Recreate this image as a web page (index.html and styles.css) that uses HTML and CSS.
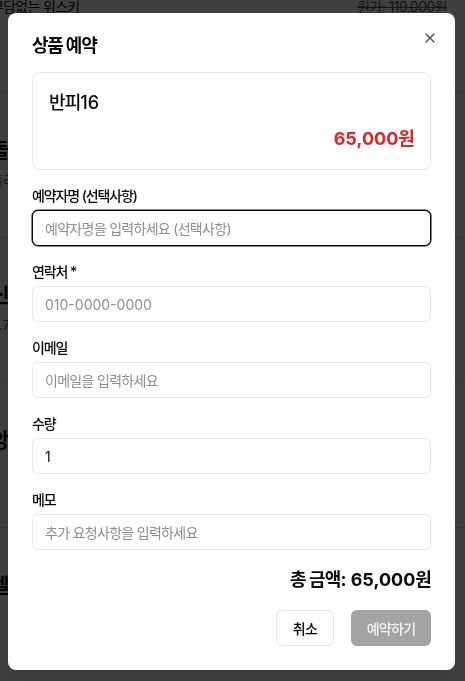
FILE: index.html
```html
<!DOCTYPE html>
<html lang="ko">
<head>
<meta charset="utf-8">
<title>상품 예약</title>
<link rel="stylesheet" href="styles.css">
</head>
<body>
<div class="page">
  <div class="top-row">
    <span class="top-name ko">부담없는 위스키</span>
    <span class="top-price">원가: 119,000원</span>
  </div>
  <div class="bg-item">
    <h3 class="bg-title">돌체</h3>
    <p class="bg-sub">홀리</p>
  </div>
  <div class="bg-item">
    <h3 class="bg-title">신상</h3>
    <p class="bg-sub">0.7</p>
  </div>
  <div class="bg-item">
    <h3 class="bg-title">앙상</h3>
    <p class="bg-sub">·</p>
    <p class="bg-sub">·</p>
  </div>
  <div class="bg-item">
    <h3 class="bg-title">벨벳</h3>
    <p class="bg-sub">·</p>
    <p class="bg-sub">·</p>
  </div>
</div>

<div class="overlay"></div>

<div class="modal" role="dialog">
  <h2 class="modal-title">상품 예약</h2>
  <button class="close-btn" aria-label="닫기">
    <svg width="16" height="16" viewBox="0 0 24 24" fill="none" stroke="currentColor" stroke-width="2" stroke-linecap="round" stroke-linejoin="round"><path d="M18 6 6 18"/><path d="m6 6 12 12"/></svg>
  </button>

  <div class="product-card">
    <div class="product-name"><span class="ko-lg">반피</span>16</div>
    <div class="product-price">65,000<span class="ko-lg">원</span></div>
  </div>

  <form class="form">
    <div class="field">
      <label class="label">예약자명 (선택사항)</label>
      <input class="input ko input-focus" type="text" placeholder="예약자명을 입력하세요 (선택사항)">
    </div>
    <div class="field">
      <label class="label">연락처 *</label>
      <input class="input" type="text" placeholder="010-0000-0000">
    </div>
    <div class="field">
      <label class="label">이메일</label>
      <input class="input ko" type="text" placeholder="이메일을 입력하세요">
    </div>
    <div class="field">
      <label class="label">수량</label>
      <input class="input" type="text" value="1">
    </div>
    <div class="field">
      <label class="label">메모</label>
      <input class="input ko" type="text" placeholder="추가 요청사항을 입력하세요">
    </div>
  </form>

  <div class="total"><span class="ko-lg">총 금액</span>: 65,000<span class="ko-lg">원</span></div>

  <div class="actions">
    <button class="btn btn-outline ko" type="button">취소</button>
    <button class="btn btn-primary ko" type="button">예약하기</button>
  </div>
</div>
</body>
</html>
```

FILE: styles.css
```css
* { box-sizing: border-box; }
html, body { margin: 0; padding: 0; }
body {
  width: 465px;
  height: 681px;
  overflow: hidden;
  background: #fff;
  color: #0a0a0a;
  font-family: Inter, "Noto Sans CJK KR", sans-serif;
}

.ko { letter-spacing: -0.05em; }
.ko-lg { letter-spacing: -0.05em; }

.page {
  margin-left: -9px;
  margin-top: -4px;
}
.top-row {
  display: flex;
  justify-content: space-between;
  align-items: center;
  height: 20px;
  padding-right: 18px;
  font-size: 14px;
  margin-bottom: 76px;
}
.top-price { color: #555; text-decoration: line-through; letter-spacing: -0.04em; }
.bg-item {
  border-top: 1px solid #d4d4d4;
  height: 145px;
  padding-top: 44px;
}
.bg-title { margin: 0; font-size: 20px; font-weight: 700; line-height: 28px; }
.bg-sub { margin: 4px 0 0; font-size: 13px; line-height: 22px; color: #555; }

.overlay {
  position: fixed;
  inset: 0;
  background: rgba(0, 0, 0, 0.75);
}

.modal {
  position: fixed;
  top: 13px;
  left: 8px;
  width: 447px;
  background: #fff;
  border-radius: 8px;
  padding: 24px;
  display: flex;
  flex-direction: column;
  box-shadow: 0 10px 15px rgba(0,0,0,0.1);
}
.modal-title {
  margin: 0 0 17px;
  font-size: 18px;
  line-height: 18px;
  font-weight: 600;
  letter-spacing: -0.07em;
}
.close-btn {
  position: absolute;
  top: 17px;
  right: 17px;
  width: 16px;
  height: 16px;
  padding: 0;
  border: 0;
  background: none;
  color: #555;
  display: flex;
}

.product-card {
  border: 1px solid #e5e7eb;
  border-radius: 8px;
  padding: 16px;
  display: flex;
  flex-direction: column;
  gap: 8px;
}
.product-name { font-size: 18px; line-height: 28px; font-weight: 500; }
.product-price {
  font-size: 18px;
  line-height: 28px;
  font-weight: 700;
  color: #dc2626;
  text-align: right;
}

.form {
  margin-top: 16px;
  display: flex;
  flex-direction: column;
  gap: 16px;
}
.field { display: flex; flex-direction: column; gap: 4px; }
.label { font-size: 14px; line-height: 20px; font-weight: 500; letter-spacing: -0.08em; }
.input {
  height: 36px;
  width: 100%;
  border: 1px solid #e5e7eb;
  border-radius: 6px;
  padding: 0 12px;
  font-family: inherit;
  font-size: 14px;
  color: #0a0a0a;
  background: #fff;
  outline: none;
}
.input::placeholder { color: #8f8f8f; }
.input-focus { border-color: #0a0a0a; box-shadow: 0 0 0 0.5px #0a0a0a; }

.total {
  margin-top: 16px;
  text-align: right;
  font-size: 18px;
  line-height: 28px;
  font-weight: 700;
}

.actions {
  margin-top: 16px;
  display: flex;
  justify-content: flex-end;
  gap: 17px;
}
.btn {
  height: 36px;
  border-radius: 6px;
  font-family: inherit;
  font-size: 14px;
  font-weight: 500;
  padding: 0;
}
.btn-outline { background: #fff; border: 1px solid #e5e7eb; color: #0a0a0a; width: 58px; }
.btn-primary { background: #a3a3a3; border: 0; color: #f2f2f2; width: 80px; }
```
